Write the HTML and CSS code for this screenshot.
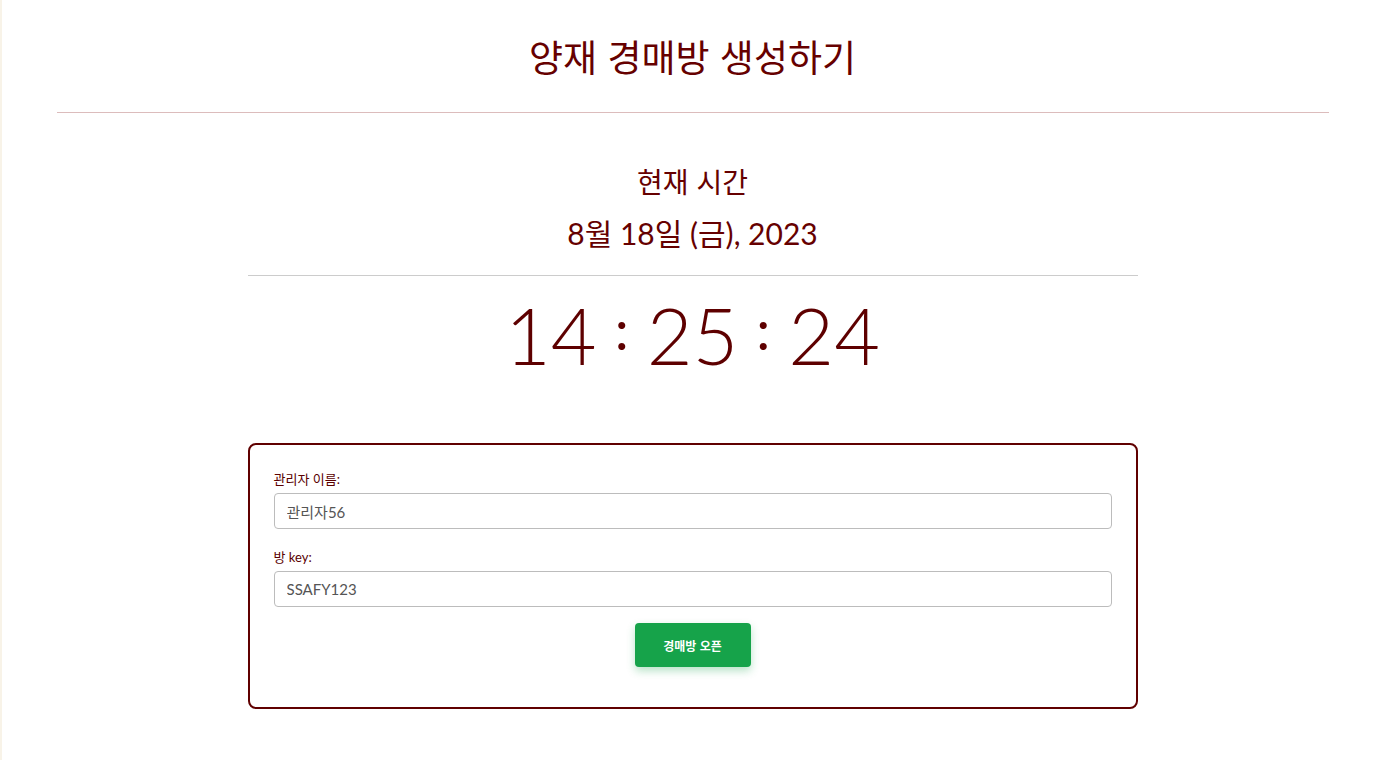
FILE: index.html
```html
<!DOCTYPE html>
<html lang="ko">
<head>
<meta charset="utf-8">
<title>양재 경매방 생성하기</title>
<link rel="stylesheet" href="styles.css">
</head>
<body>
<div class="page">
  <header class="header">
    <h1 class="title">양재 경매방 생성하기</h1>
  </header>
  <section class="clock-section">
    <div class="now-label">현재 시간</div>
    <div class="date">8월 18일 (금), 2023</div>
    <div class="clock-divider"></div>
    <div class="clock">
      <span>14</span><span class="colon">:</span><span>25</span><span class="colon">:</span><span>24</span>
    </div>
  </section>
  <form class="card">
    <label class="field">
      <span class="label">관리자 이름:</span>
      <input class="input" type="text" value="관리자56">
    </label>
    <label class="field">
      <span class="label">방 key:</span>
      <input class="input" type="text" value="SSAFY123">
    </label>
    <div class="actions">
      <button class="btn" type="button">경매방 오픈</button>
    </div>
  </form>
</div>
</body>
</html>
```

FILE: styles.css
```css
* { box-sizing: border-box; }
html, body { margin: 0; padding: 0; background: #fff; }
body {
  font-family: "Lato", "Noto Sans CJK KR", sans-serif;
  color: #660000;
  box-shadow: inset 2px 0 0 #f8f3e8;
  min-height: 760px;
}
.page {
  display: flex;
  flex-direction: column;
  align-items: center;
}
.header {
  width: calc(100% - 113px);
  border-bottom: 1px solid #dcbcbc;
  display: flex;
  justify-content: center;
  padding-top: 30px;
  height: 113px;
}
.title {
  margin: 0;
  font-family: "Noto Sans CJK KR", sans-serif;
  font-weight: 400;
  font-size: 37px;
  line-height: 52px;
  color: #660000;
}
.clock-section {
  width: 890px;
  display: flex;
  flex-direction: column;
  align-items: center;
  padding-top: 48px;
}
.now-label {
  font-family: "Noto Sans CJK KR", sans-serif;
  font-size: 28px;
  line-height: 40px;
}
.date {
  font-size: 30px;
  line-height: 40px;
  margin-top: 12px;
  font-family: "Lato", "Noto Sans CJK KR", sans-serif;
}
.clock-divider {
  width: 100%;
  border-top: 1px solid #cccccc;
  margin-top: 22px;
}
.clock {
  display: flex;
  align-items: center;
  gap: 18px;
  font-size: 79px;
  font-weight: 300;
  line-height: 100px;
  margin-top: 9px;
  color: #5e0000;
}
.clock .colon { font-size: 56px; position: relative; top: -6px; font-weight: 400; }
.card {
  width: 890px;
  margin-top: 58px;
  border: 2px solid #600000;
  border-radius: 8px;
  padding: 26px 24px 40px;
  display: flex;
  flex-direction: column;
  gap: 20px;
}
.field {
  display: flex;
  flex-direction: column;
  gap: 6px;
}
.label {
  font-family: "Lato", "Noto Sans CJK KR", sans-serif;
  font-size: 13px;
  line-height: 16px;
  color: #5a0000;
}
.input {
  height: 36px;
  border: 1px solid #bcbcbc;
  border-radius: 4px;
  padding: 0 12px;
  font-family: "Lato", "Noto Sans CJK KR", sans-serif;
  font-size: 15px;
  color: #555;
  background: #fff;
}
.actions {
  display: flex;
  justify-content: center;
  margin-top: -4px;
}
.btn {
  width: 116px;
  height: 44px;
  border: none;
  border-radius: 4px;
  background: #16a34a;
  color: #fff;
  font-family: "Noto Sans CJK KR", sans-serif;
  font-weight: 700;
  font-size: 12px;
  box-shadow: 0 4px 8px rgba(22, 163, 74, 0.3);
}
```
